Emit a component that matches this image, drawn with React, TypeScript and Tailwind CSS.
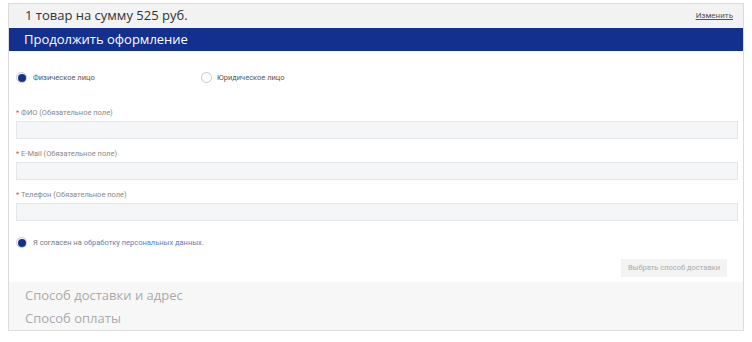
import React from 'react';

const fields = ['ФИО', 'E-Mail', 'Телефон'];

function Radio({ checked }: { checked?: boolean }) {
  return (
    <span className="flex h-[11px] w-[11px] items-center justify-center rounded-full border border-[#c9c9c9] bg-white">
      {checked && <span className="h-[8px] w-[8px] rounded-full bg-[#14318f]" />}
    </span>
  );
}

export default function App() {
  return (
    <div className="bg-white pt-[3px] pl-[8px] w-[752px] h-[342px]" style={{ fontFamily: '"Open Sans", "Liberation Sans", sans-serif' }}>
      <div className="w-[736px] border border-[#dcdcdc]">
        <div className="flex h-[24px] items-center justify-between bg-[#f2f2f2] pl-[16px] pr-[10px]">
          <span className="text-[13px] text-[#333]">1 товар на сумму 525 руб.</span>
          <span className="text-[8px] text-[#555] underline" style={{ fontFamily: 'Roboto, sans-serif' }}>Изменить</span>
        </div>
        <div className="flex h-[23px] items-center bg-[#13308f] pl-[15px] text-[13px] text-white">
          Продолжить оформление
        </div>
        <div className="px-[7px] pb-[5px]" style={{ fontFamily: 'Roboto, "Liberation Sans", sans-serif' }}>
          <div className="flex items-center pt-[21px] text-[7.5px] text-[#555]">
            <div className="flex w-[185px] items-center gap-[6px]">
              <Radio checked />
              <span>Физическое лицо</span>
            </div>
            <div className="flex items-center gap-[5px]">
              <Radio />
              <span>Юридическое лицо</span>
            </div>
          </div>
          <div className="mt-[25px] flex flex-col gap-[10px]">
            {fields.map((f) => (
              <div key={f}>
                <div className="text-[7.5px] text-[#888] leading-[10px]">
                  <span className="text-[#e0503c]">*</span> {f} (Обязательное поле)
                </div>
                <div className="mt-[3px] h-[18px] w-[722px] border border-[#e4e6ea] bg-[#f5f6f8]" />
              </div>
            ))}
          </div>
          <div className="mt-[16px] flex items-center gap-[6px] text-[7.5px] text-[#777]">
            <Radio checked />
            <span>
              Я согласен на <span className="text-[#5a7fbd]">обработку персональных данных.</span>
            </span>
          </div>
          <div className="mt-[10px] flex justify-end pr-[9px]">
            <div className="flex h-[18px] w-[106px] items-center justify-center bg-[#f3f3f3] text-[7.5px] text-[#aaa]">
              Выбрать способ доставки
            </div>
          </div>
        </div>
        <div className="bg-[#f7f7f7] pl-[16px] pt-[2px] text-[13px] leading-[23px] text-[#aaa]">
          <div>Способ доставки и адрес</div>
          <div>Способ оплаты</div>
        </div>
      </div>
    </div>
  );
}
